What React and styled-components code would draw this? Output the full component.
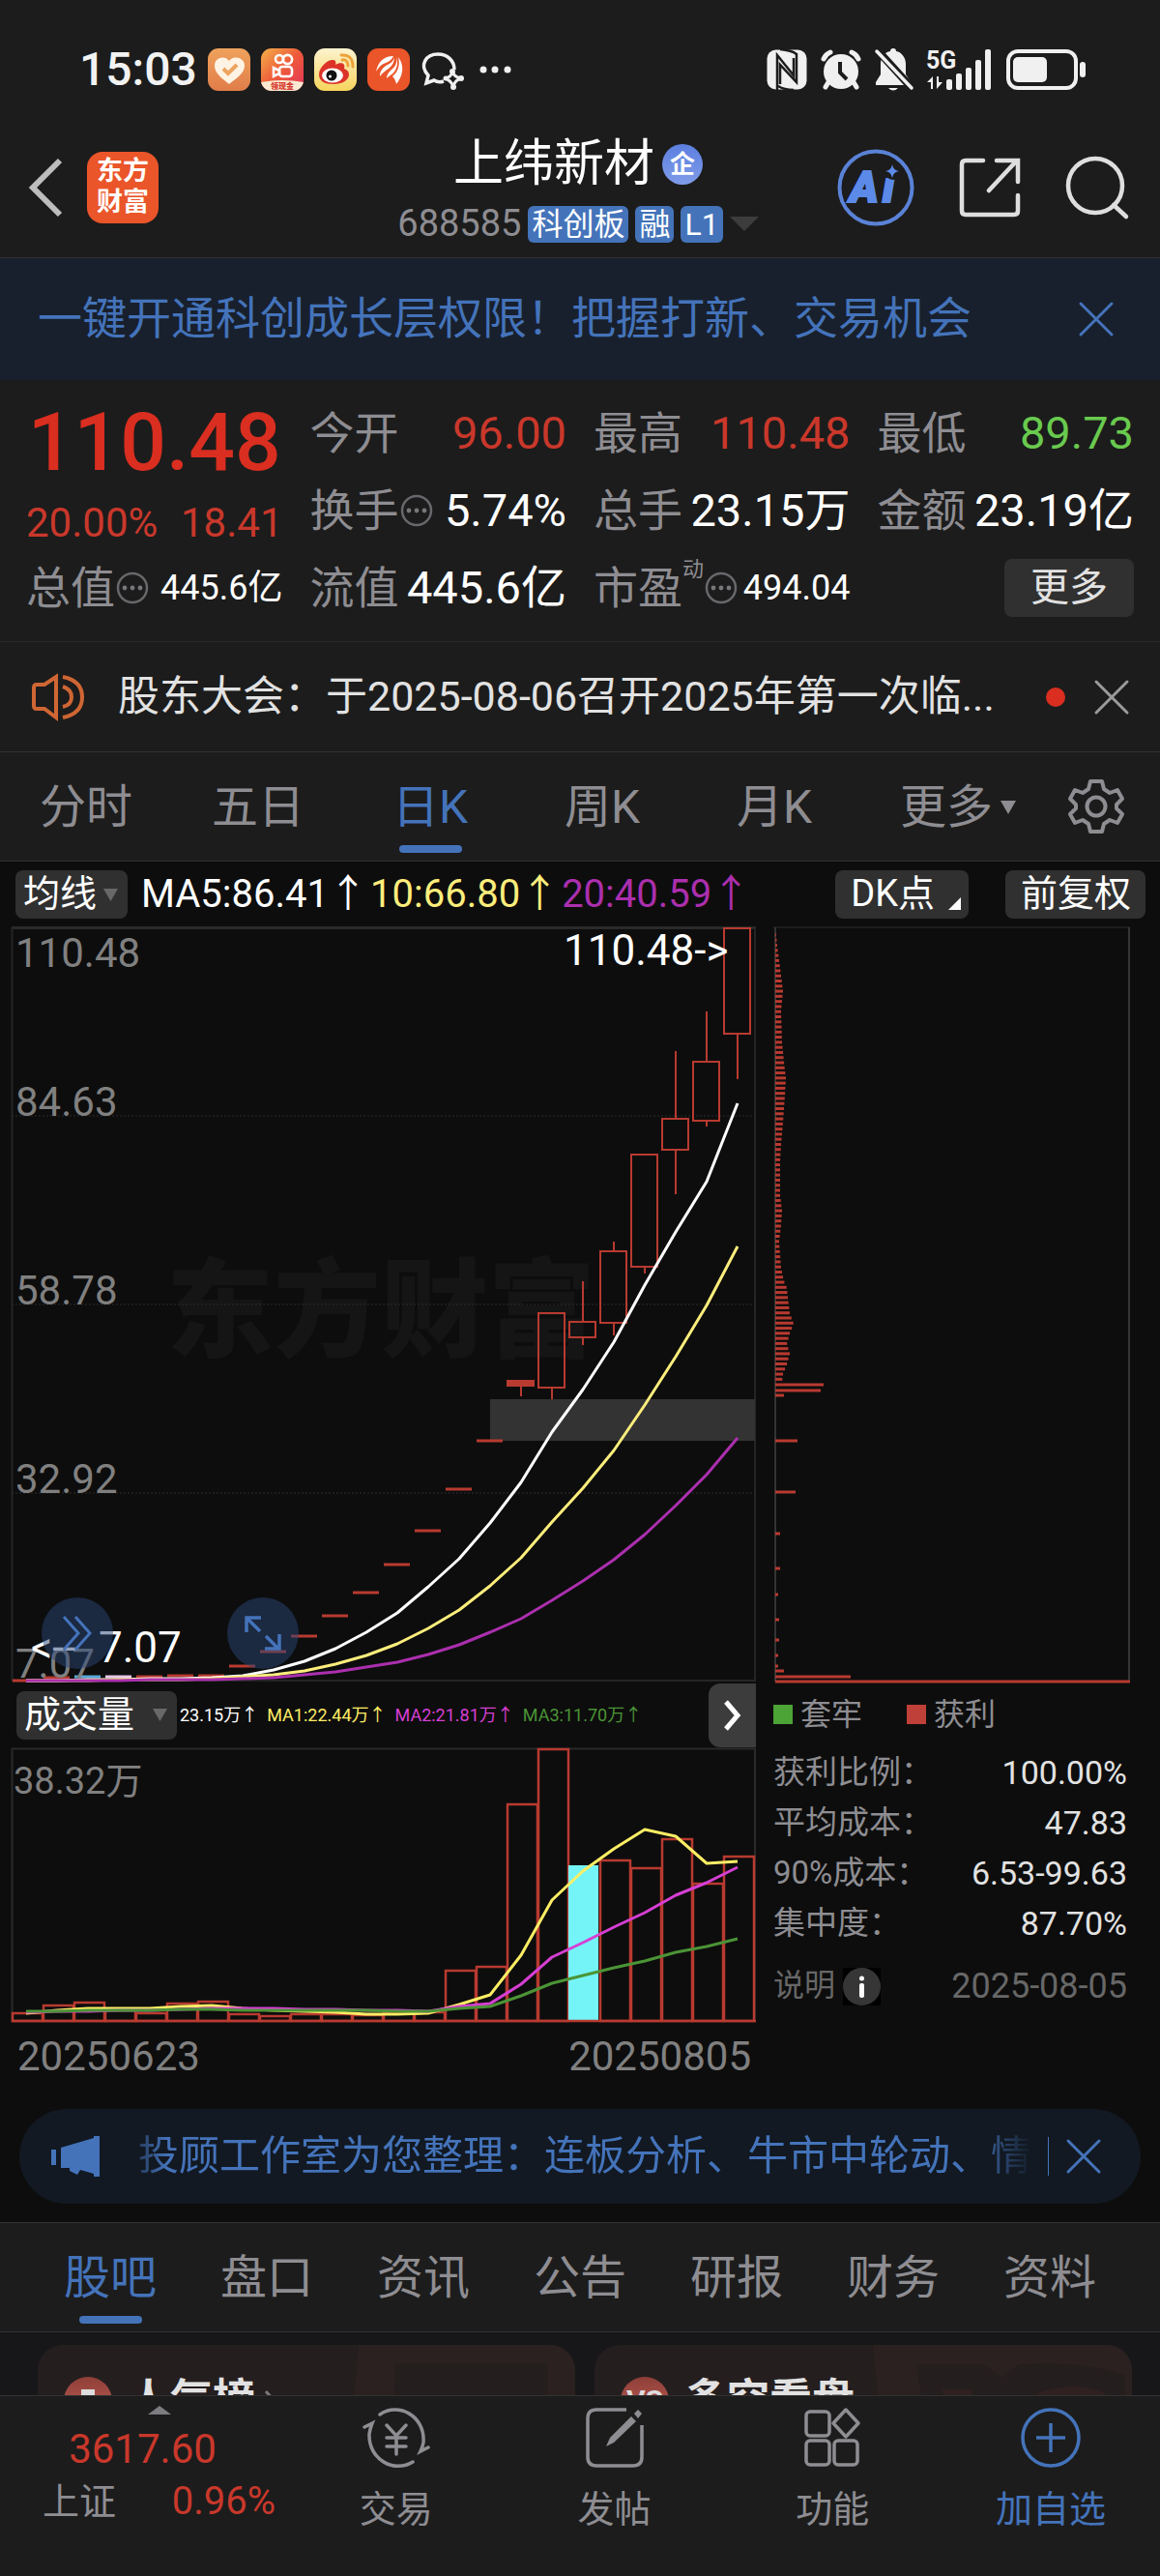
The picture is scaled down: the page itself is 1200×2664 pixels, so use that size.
import React from 'react';
import styled, { createGlobalStyle } from 'styled-components';

const c = {
  panel: '#1c1c1c',
  canvas: '#0d0d0d',
  line: '#323233',
  grey: '#8e8d92',
  axis: '#808080',
  soft: '#e2e2e2',
  blue: '#4473ba',
  red: '#c9382b',
  price: '#d92e20',
  green: '#69ca4e',
  candle: '#b83a30',
  chip: '#303030',
};

const GlobalStyle = createGlobalStyle`
  *, *::before, *::after { box-sizing: border-box; }
  body {
    margin: 0;
    background: ${c.panel};
    color: #fff;
    font-family: Roboto, "Noto Sans CJK SC", sans-serif;
    line-height: 1.3;
  }
  button, select {
    font: inherit;
    color: inherit;
    background: none;
    border: 0;
    padding: 0;
    margin: 0;
    cursor: pointer;
  }
  dl, dt, dd, h1, h2, p { margin: 0; font-weight: 400; }
  svg { display: block; flex: none; overflow: visible; }
`;

const Page = styled.div`
  display: flex;
  flex-direction: column;
  min-width: 0;
  white-space: nowrap;
  overflow: hidden;
`;

/* ---------- status bar ---------- */
const StatusBar = styled.div`
  display: flex;
  align-items: center;
  justify-content: space-between;
  height: 122px;
  padding: 22px 77px 0 82px;
`;
const StatusGroup = styled.div`
  display: flex;
  align-items: center;
  gap: ${(p) => p.$gap}px;
`;
const Clock = styled.time`
  font-size: 48px;
  font-weight: 500;
  line-height: 56px;
  color: #f2f2f2;
`;

/* ---------- header ---------- */
const Header = styled.header`
  display: grid;
  grid-template-columns: 1fr auto 1fr;
  align-items: center;
  height: 145px;
  padding: 0 32px 0 28px;
  border-bottom: 1px solid ${c.line};
`;
const HeaderSide = styled.div`
  display: flex;
  align-items: center;
  gap: ${(p) => p.$gap}px;
  justify-content: ${(p) => (p.$end ? 'flex-end' : 'flex-start')};
`;
const IconButton = styled.button`
  display: flex;
  align-items: center;
  justify-content: center;
  color: ${(p) => p.$color || c.grey};
`;
const BrandLogo = styled.div`
  width: 74px;
  height: 74px;
  padding-top: 4px;
  border-radius: 16px;
  background: #ea5529;
  font-size: 27px;
  font-weight: 700;
  line-height: 32px;
  text-align: center;
`;
const TitleBlock = styled.div`
  display: flex;
  flex-direction: column;
  align-items: center;
  gap: 3px;
  padding-top: 4px;
`;
const Title = styled.h1`
  display: flex;
  align-items: center;
  gap: 8px;
  font-size: 52px;
  line-height: 68px;
`;
const CompanyMark = styled.span`
  width: 42px;
  height: 42px;
  border-radius: 50%;
  background: linear-gradient(#5c7fe0, #7f9ce8);
  font-size: 26px;
  font-weight: 700;
  line-height: 42px;
  text-align: center;
`;
const CodeRow = styled.div`
  display: flex;
  align-items: center;
  gap: 7px;
  height: 50px;
  font-size: 38px;
  color: ${c.grey};
`;
const Tag = styled.span`
  height: 38px;
  padding: 0 4px;
  border-radius: 6px;
  background: ${c.blue};
  color: #fff;
  font-size: 32px;
  line-height: 38px;
`;

/* ---------- promo banner ---------- */
const Banner = styled.div`
  display: flex;
  align-items: center;
  justify-content: space-between;
  height: 126px;
  padding: 0 48px 0 39px;
  background: #18202d;
  color: ${c.blue};
  font-size: 46px;
`;

/* ---------- quote ---------- */
const Quote = styled.section`
  display: grid;
  grid-template-columns: repeat(4, 1fr);
  gap: 28px;
  padding: 15px 27px;
  border-bottom: 1px solid #29292a;
`;
const QuoteColumn = styled.dl`
  display: flex;
  flex-direction: column;
`;
const Price = styled.dd`
  height: 100px;
  font-size: 84px;
  font-weight: 500;
  line-height: 100px;
  text-align: center;
  color: ${c.price};
`;
const Change = styled.dd`
  display: flex;
  justify-content: space-between;
  height: 60px;
  font-size: 42px;
  line-height: 66px;
  color: ${c.red};
`;
const Stat = styled.div`
  display: flex;
  align-items: center;
  justify-content: space-between;
  height: 80px;
`;
const StatLabel = styled.dt`
  display: flex;
  align-items: center;
  font-size: 46px;
  line-height: 60px;
  color: ${c.grey};
`;
const Superscript = styled.sup`
  align-self: flex-start;
  font-size: 22px;
  line-height: 22px;
`;
const StatValue = styled.dd`
  font-size: ${(p) => (p.$small ? 36 : 47)}px;
  line-height: 60px;
  color: ${(p) => p.$color || '#fff'};
`;
const MoreCell = styled.div`
  display: flex;
  align-items: center;
  justify-content: flex-end;
  height: 80px;
`;
const MoreButton = styled.button`
  width: 134px;
  height: 60px;
  border-radius: 8px;
  background: ${c.chip};
  color: ${c.soft};
  font-size: 40px;
  line-height: 60px;
`;

/* ---------- notice ---------- */
const Notice = styled.div`
  display: flex;
  align-items: center;
  height: 114px;
  padding: 0 32px;
  border-bottom: 1px solid ${c.line};
`;
const NoticeText = styled.p`
  flex: 1;
  min-width: 0;
  margin-left: 34px;
  overflow: hidden;
  font-size: 43px;
  color: ${c.soft};
`;
const UnreadDot = styled.i`
  width: 20px;
  height: 20px;
  margin-right: 30px;
  border-radius: 50%;
  background: ${c.price};
`;

/* ---------- tabs ---------- */
const TabBar = styled.nav`
  display: flex;
  height: 113px;
  padding: 0 ${(p) => p.$inset || 0}px;
  border-bottom: 1px solid ${c.line};
  background: ${c.panel};
`;
const Tab = styled.button`
  flex: 1;
  display: flex;
  flex-direction: column;
  align-items: center;
  padding-top: 21px;
  color: ${(p) => (p.$active ? c.blue : c.grey)};
`;
const TabLabel = styled.span`
  display: flex;
  align-items: center;
  height: 72px;
  font-size: 48px;
`;
const TabCaret = styled.span`
  width: 24px;
  margin-right: -24px;
  padding-left: 8px;
`;
const TabMarker = styled.i`
  width: 65px;
  height: 8px;
  margin-top: 3px;
  border-radius: 4px;
  background: ${c.blue};
`;
const SettingsCell = styled(IconButton)`
  width: 132px;
`;

/* ---------- charts ---------- */
const ChartPanel = styled.section`
  background: ${c.canvas};
  padding-bottom: 19px;
  border-bottom: 1px solid ${c.line};
`;
const ChartToolbar = styled.div`
  display: flex;
  align-items: center;
  height: 68px;
  padding: 0 15px 0 16px;
`;
const Picker = styled.label`
  display: flex;
  align-items: center;
  gap: ${(p) => p.$gap}px;
  height: 50px;
  padding: 0 10px 0 8px;
  border-radius: 8px;
  background: ${c.chip};
  color: #686868;
  font-size: 38px;
`;
const PickerSelect = styled.select`
  appearance: none;
  height: 50px;
  color: #fff;
  outline: 0;
  option { background: ${c.chip}; }
`;
const Averages = styled.div`
  display: flex;
  gap: ${(p) => p.$gap}px;
  margin-left: ${(p) => p.$left}px;
  font-size: ${(p) => p.$size}px;
  line-height: 50px;
`;
const Average = styled.span`
  color: ${(p) => p.$color};
`;
const ChipButton = styled.button`
  display: flex;
  align-items: center;
  gap: 14px;
  height: 50px;
  padding: 0 ${(p) => p.$right}px 0 16px;
  margin-left: ${(p) => (p.$push ? 'auto' : '38px')};
  border-radius: 8px;
  background: ${c.chip};
  color: #fff;
  font-size: 38px;
`;
const ChartGrid = styled.div`
  display: grid;
  grid-template-columns: 770fr 369fr;
  gap: 18px;
  padding: 0 31px 0 12px;
`;
const ChartColumn = styled.div`
  min-width: 0;
`;
const Drawing = styled.svg`
  width: 100%;
  height: auto;
`;
const KlineFrame = styled.div`
  position: relative;
`;
const RoundTool = styled.button`
  position: absolute;
  bottom: 13px;
  left: ${(p) => p.$left}%;
  display: flex;
  align-items: center;
  justify-content: center;
  width: 74px;
  height: 74px;
  border-radius: 50%;
  background: rgba(42, 70, 118, 0.5);
`;
const VolumeToolbar = styled.div`
  display: flex;
  align-items: center;
  height: 69px;
  padding-left: 5px;
`;
const NextIndicator = styled.button`
  display: flex;
  align-items: center;
  justify-content: center;
  width: 49px;
  height: 66px;
  margin-left: auto;
  border-radius: 12px 0 0 12px;
  background: #3c3c3c;
`;
const DateAxis = styled.div`
  display: flex;
  justify-content: space-between;
  padding: 0 5px 0 6px;
  font-size: 42px;
  line-height: 72px;
  color: ${c.axis};
`;
const Legend = styled.div`
  display: flex;
  gap: 46px;
  height: 68px;
  font-size: 32px;
  line-height: 68px;
  color: ${c.grey};
`;
const LegendItem = styled.span`
  display: flex;
  align-items: center;
  gap: 8px;
  &::before {
    content: '';
    width: 20px;
    height: 20px;
    background: ${(p) => p.$color};
  }
`;
const CostList = styled.dl`
  display: flex;
  flex-direction: column;
  padding-right: 3px;
  font-size: 34px;
  line-height: 52px;
`;
const CostRow = styled.div`
  display: flex;
  justify-content: space-between;
  dt { font-size: 33px; color: ${c.grey}; }
  dd { color: ${c.soft}; }
`;
const CostFooter = styled.div`
  display: flex;
  align-items: center;
  justify-content: space-between;
  height: 78px;
  padding-right: 3px;
  font-size: 36px;
  color: #676767;
`;
const HelpButton = styled.button`
  display: flex;
  align-items: center;
  gap: 8px;
  font-size: 32px;
`;

/* ---------- adviser strip ---------- */
const Adviser = styled.div`
  display: flex;
  align-items: center;
  height: 98px;
  margin: 18px 20px 0;
  padding: 0 41px 0 33px;
  border-radius: 49px;
  background: #121922;
  color: ${c.blue};
`;
const AdviserText = styled.p`
  flex: 1;
  min-width: 0;
  margin-left: 40px;
  overflow: hidden;
  font-size: 42px;
  mask-image: linear-gradient(90deg, rgba(0, 0, 0, 0.4), #000 30px, #000 calc(100% - 70px), transparent calc(100% - 8px));
`;
const AdviserClose = styled(IconButton)`
  height: 40px;
  margin-left: 8px;
  padding-left: 18px;
  border-left: 1px solid ${c.blue};
`;

/* ---------- community cards ---------- */
const Cards = styled.section`
  display: grid;
  grid-template-columns: 1fr 1fr;
  gap: 20px;
  height: 65px;
  padding: 13px 29px 0 39px;
  overflow: hidden;
  background: #17171a;
`;
const Card = styled.article`
  position: relative;
  display: flex;
  align-items: center;
  height: 116px;
  padding-left: 27px;
  border-radius: 26px;
  overflow: hidden;
  background: #251e1e;
`;
const CardArt = styled.svg`
  position: absolute;
  top: 0;
  right: 0;
`;
const CardBadge = styled.span`
  width: 50px;
  height: 50px;
  margin-right: 16px;
  border-radius: 50%;
  background: linear-gradient(#8f3f38, #c4645a);
  color: #ddd;
  font-size: 30px;
  font-weight: 700;
  line-height: 50px;
  text-align: center;
`;
const CardTitle = styled.h2`
  margin-right: 10px;
  font-size: 44px;
  font-weight: 700;
  color: ${c.soft};
`;

/* ---------- bottom bar ---------- */
const BottomBar = styled.footer`
  display: flex;
  height: 187px;
  border-top: 1px solid ${c.line};
  background: ${c.panel};
`;
const IndexTicker = styled.button`
  display: flex;
  flex-direction: column;
  align-items: center;
  width: 297px;
  padding: 10px 12px 0 44px;
  color: ${c.grey};
`;
const IndexValue = styled.strong`
  height: 54px;
  margin: 9px 0 0 -34px;
  font-size: 42px;
  font-weight: 400;
  line-height: 54px;
  color: ${c.red};
`;
const IndexRow = styled.span`
  display: flex;
  align-self: stretch;
  justify-content: space-between;
  font-size: 38px;
  line-height: 54px;
`;
const IndexChange = styled.span`
  font-size: 40px;
  color: ${c.red};
`;
const NavItem = styled.button`
  flex: 1;
  display: flex;
  flex-direction: column;
  align-items: center;
  gap: 14px;
  padding-top: 10px;
  color: ${(p) => (p.$accent ? c.blue : c.grey)};
  font-size: 38px;
  line-height: 54px;
`;

/* ---------- icons ---------- */
const Caret = ({ w, h }) => (
  <svg width={w} height={h} viewBox="0 0 10 10" preserveAspectRatio="none" fill="currentColor" aria-hidden="true">
    <path d="M0 0h10L5 10z" />
  </svg>
);
const Cross = ({ size, stroke = 3 }) => (
  <svg width={size} height={size} viewBox={`0 0 ${size} ${size}`} stroke="currentColor" strokeWidth={stroke} strokeLinecap="round">
    <path d={`M2 2L${size - 2} ${size - 2}M${size - 2} 2L2 ${size - 2}`} />
  </svg>
);
const Ellipsis = () => (
  <svg width="35" height="35" viewBox="0 0 35 35" fill="none" stroke="#68676b" strokeWidth="2.5">
    <circle cx="18" cy="17" r="15" />
    <g fill="#77767a" stroke="none">
      <circle cx="10" cy="17" r="2.400" />
      <circle cx="18" cy="17" r="2.400" />
      <circle cx="26" cy="17" r="2.400" />
    </g>
  </svg>
);

const HeartApp = () => (
  <svg width="44" height="44" viewBox="0 0 44 44">
    <defs><linearGradient id="heart" x2="0" y2="1"><stop stopColor="#efa25c" /><stop offset="1" stopColor="#e07d4a" /></linearGradient></defs>
    <rect width="44" height="44" rx="11" fill="url(#heart)" />
    <path d="M22 13c-4-6-15-4-15 5 0 8 9 14 15 19 6-5 16-11 16-19 0-9-12-11-16-5z" fill="#fff3e4" />
    <path d="M16 21l5 5 9-9" fill="none" stroke="#eda45f" strokeWidth="4" />
  </svg>
);
const KuaishouApp = () => (
  <svg width="44" height="44" viewBox="0 0 44 44">
    <defs>
      <linearGradient id="ks" x2="1" y2="1"><stop stopColor="#f3b24a" /><stop offset=".5" stopColor="#ee5a3a" /><stop offset="1" stopColor="#e2345a" /></linearGradient>
      <clipPath id="ksClip"><rect width="44" height="44" rx="11" /></clipPath>
    </defs>
    <g clipPath="url(#ksClip)">
      <rect width="44" height="44" fill="url(#ks)" />
      <g fill="none" stroke="#fff" strokeWidth="2.600">
        <circle cx="19" cy="11" r="4" /><circle cx="27.500" cy="11.500" r="4.600" />
        <rect x="19" y="19" width="13" height="10" rx="3" /><path d="M19 23l-6-3v9l6-3z" />
      </g>
      <path d="M0 35q22-4 44 0v9H0z" fill="#fbe9d2" />
    </g>
    <text x="22" y="42" fontSize="8" fontWeight="900" textAnchor="middle" fill="#d63a2c">领现金</text>
  </svg>
);
const WeiboApp = () => (
  <svg width="44" height="44" viewBox="0 0 44 44">
    <defs><linearGradient id="wb" x2="0" y2="1"><stop stopColor="#fdf3cf" /><stop offset="1" stopColor="#f6d55c" /></linearGradient></defs>
    <rect width="44" height="44" rx="11" fill="url(#wb)" />
    <path d="M5 27c0-7 8-15 14-15 3 0 4 2 3 5 5-3 11-2 9 4 3 1 5 3 5 6 0 6-7 10-16 10S5 34 5 27z" fill="#dc3328" />
    <ellipse cx="19" cy="28" rx="11" ry="7.500" fill="#fff" />
    <circle cx="18" cy="28" r="5.500" fill="#111" /><circle cx="16.500" cy="29" r="1.500" fill="#fff" />
    <path d="M29 12q6-1 6 6M28 7q12-1 12 12" fill="none" stroke="#eda23a" strokeWidth="3" strokeLinecap="round" />
  </svg>
);
const EastmoneyApp = () => (
  <svg width="44" height="44" viewBox="0 0 44 44">
    <rect width="44" height="44" rx="11" fill="#ea5529" />
    <g fill="#fff">
      <path d="M27 8C17 8 11 14 9 24c3-5 6-8 10-9 3-1 6-3 8-7z" />
      <path d="M28 9c-1 5-5 7-9 9-4 3-6 6-6 11 3-4 6-6 9-8 4-3 6-7 6-12z" />
      <path d="M30 9c1 6-1 10-5 13-3 3-5 5-5 9 3-3 6-4 8-7 3-4 4-9 2-15z" />
      <path d="M32 9c6 8 6 18-2 28-1-4-2-6-4-8 6-5 8-12 6-20z" />
    </g>
  </svg>
);
const ChatIcon = () => (
  <svg width="46" height="44" viewBox="0 0 46 44" fill="none" stroke="#f0f0f0" strokeWidth="3.500">
    <path d="M24 34c-3 1-7 1-10-1l-8 3 2-8C-2 17 6 6 18 6c10 0 17 7 17 16" />
    <path d="M33 24q2 6 9 7-7 2-8 9-2-7-9-9 7-1 8-7z" strokeWidth="3" />
    <g fill="#f0f0f0" stroke="none"><circle cx="33" cy="24" r="3" /><circle cx="42" cy="31" r="3" /><circle cx="34" cy="40" r="3" /><circle cx="26" cy="31" r="2.500" /></g>
  </svg>
);
const MoreDots = () => (
  <svg width="42" height="10" viewBox="0 0 42 10" fill="#f0f0f0"><circle cx="8" cy="5" r="3.500" /><circle cx="20" cy="5" r="3.500" /><circle cx="33" cy="5" r="3.500" /></svg>
);
const NfcIcon = () => (
  <svg width="42" height="42" viewBox="0 0 42 42">
    <rect width="41" height="41" x="0.500" y="0.500" rx="9" fill="#f0f0f0" />
    <path d="M11 42V6l17 21V9M14 0q12 1 17 5M28 42q-10 0-16-4M31 4v30L14 16v20" fill="none" stroke="#1c1c1c" strokeWidth="2.500" />
  </svg>
);
const AlarmIcon = () => (
  <svg width="42" height="42" viewBox="0 0 42 42">
    <circle cx="21" cy="23" r="18" fill="#f0f0f0" />
    <g stroke="#f0f0f0" strokeWidth="5" strokeLinecap="round" fill="none"><path d="M3 10q2-5 7-7M39 10q-2-5-7-7M8 34l-3 5M34 34l3 5" /></g>
    <path d="M20 13v11l7 7" fill="none" stroke="#1c1c1c" strokeWidth="4" />
  </svg>
);
const MutedBell = () => (
  <svg width="40" height="46" viewBox="0 0 40 46">
    <path d="M19 1c2 0 3 1 3 3 6 1 10 7 10 13v11l5 8v3H1v-3l5-8V17c0-6 4-12 10-13 0-2 1-3 3-3zM14 42h10q-5 5-10 0z" fill="#f0f0f0" />
    <path d="M0 0l40 44" stroke="#1c1c1c" strokeWidth="8" /><path d="M2 4l36 38" stroke="#f0f0f0" strokeWidth="3.500" strokeLinecap="round" />
  </svg>
);
const SignalIcon = () => (
  <svg width="68" height="42" viewBox="0 0 68 42" fill="#f0f0f0">
    <text x="-1" y="20" fontSize="25" fontWeight="700">5G</text>
    <path d="M0 34l6-6v13H4v-7zM16 34l-6 7V28h2v6z" />
    <rect x="20" y="31" width="6" height="11" rx="2" /><rect x="30" y="25" width="6" height="17" rx="2" /><rect x="40" y="19" width="6" height="23" rx="2" /><rect x="50" y="11" width="6" height="31" rx="2" /><rect x="60" y="0" width="6" height="42" rx="2" />
  </svg>
);
const BatteryIcon = () => (
  <svg width="82" height="42" viewBox="0 0 82 42">
    <rect x="2" y="2" width="70" height="38" rx="10" fill="none" stroke="#f0f0f0" strokeWidth="4" />
    <rect x="7" y="8" width="35" height="26" rx="5" fill="#f0f0f0" /><rect x="76" y="13" width="6" height="16" rx="3" fill="#f0f0f0" />
  </svg>
);
const BackIcon = () => (
  <svg width="36" height="62" viewBox="0 0 36 62" fill="none" stroke="#bdbdbd" strokeWidth="6"><path d="M34 3L6 31l28 28" /></svg>
);
const AiIcon = () => (
  <svg width="80" height="80" viewBox="0 0 80 80">
    <circle cx="40" cy="40" r="37.500" fill="none" stroke="#5a82d6" strokeWidth="4" />
    <text y="55" fontSize="45" fontWeight="900" fontStyle="italic" fill="#5c8ae8" stroke="#5c8ae8" strokeWidth="2"><tspan x="13">A</tspan><tspan x="47">i</tspan></text>
    <circle cx="58" cy="23" r="9" fill="#1c1c1c" />
    <path d="M57 16q1 6 7 7-6 1-7 7-1-6-7-7 6-1 7-7z" fill="#5c8ae8" />
  </svg>
);
const ShareIcon = () => (
  <svg width="64" height="64" viewBox="0 0 64 64" fill="none" stroke="#dedede" strokeWidth="4.500" strokeLinecap="round">
    <path d="M25 4H7q-4 0-4 4v48q0 4 4 4h50q4 0 4-4V40M39 4h22v22M59 5L31 35" />
  </svg>
);
const SearchIcon = () => (
  <svg width="66" height="66" viewBox="0 0 66 66" fill="none" stroke="#dedede" strokeWidth="4.500" strokeLinecap="round">
    <circle cx="31" cy="31" r="28" /><path d="M50 51l13 12" />
  </svg>
);
const SpeakerIcon = () => (
  <svg width="56" height="50" viewBox="0 0 56 50" fill="none" stroke="#cf6633" strokeWidth="4">
    <path d="M26 4v42L14 37H6q-3 0-3-3V15q0-3 3-3h8L26 4zM33 14q9 3 9 11t-9 10M33 4q20 4 20 21T33 46" />
  </svg>
);
const GearIcon = () => (
  <svg width="58" height="58" viewBox="0 0 58 58" fill="none" stroke="currentColor" strokeWidth="4" strokeLinejoin="round">
    <path d="M23 3h12l2 8 6 4 8-3 5 9-6 6v4l6 6-5 9-8-3-6 4-2 8H23l-2-8-6-4-8 3-5-9 6-6v-4l-6-6 5-9 8 3 6-4z" /><circle cx="29" cy="29" r="9.500" />
  </svg>
);
const MegaphoneIcon = () => (
  <svg width="50" height="44" viewBox="0 0 50 44" fill="currentColor">
    <path d="M0 15h5v16H0zM10 13L44 3V1h6v42h-6v-3l-14-4-3 5-8-4v-3h-9z" />
  </svg>
);
const InfoIcon = () => (
  <svg width="39" height="39" viewBox="0 0 39 39"><rect width="39" height="39" fill="#000" /><circle cx="19.500" cy="19.500" r="19.500" fill="#363636" /><circle cx="19.500" cy="11" r="2.500" fill="#fff" /><rect x="17" y="16" width="5" height="15" rx="2" fill="#fff" /></svg>
);
const TradeIcon = () => (
  <svg width="72" height="66" viewBox="0 0 72 66" fill="none" stroke="currentColor" strokeWidth="3.500" strokeLinecap="round">
    <path d="M19 9C38-4 66 10 64 38q-1 5-3 9l8-4M53 58C34 70 7 56 8 29q1-6 3-11l-8 4M26 20l10 11 10-11M36 31v19M26 33h20M26 42h20" />
  </svg>
);
const PostIcon = () => (
  <svg width="62" height="66" viewBox="0 0 62 66" fill="none" stroke="currentColor" strokeWidth="3.500">
    <path d="M43 4H12q-9 0-9 9v40q0 9 9 9h38q9 0 9-9V20" />
    <path d="M22 42l4-9 22-22 5 5-23 22zM51 8l4-4 4 4-4 5z" fill="currentColor" stroke="none" />
  </svg>
);
const AppsIcon = () => (
  <svg width="60" height="66" viewBox="0 0 60 66" fill="none" stroke="currentColor" strokeWidth="3.500" strokeLinejoin="round">
    <rect x="3" y="6" width="24" height="25" rx="4" /><rect x="3" y="36" width="24" height="25" rx="4" /><rect x="32" y="36" width="24" height="25" rx="4" />
    <path d="M44 4L57 18 44 32 31 18z" />
  </svg>
);
const AddIcon = () => (
  <svg width="66" height="66" viewBox="0 0 66 66" fill="none" stroke="currentColor" strokeWidth="3.500"><circle cx="33" cy="33" r="29" /><path d="M33 18v30M18 33h30" /></svg>
);

/* ---------- chart data ---------- */
const STEP = 32;
const slotX = (i) => STEP * i + 15;

const gaps = [779, 776, 775, 775, 775, 774, 774, 764, 749, 733, 712, 688, 659, 624, 581, 531];
const gapTint = { 2: '#5aa9d8', 3: '#e8c8e8' };
const candles = [
  { i: 16, top: 469, bottom: 474, low: 485, solid: true },
  { i: 17, top: 399, bottom: 476, low: 488 },
  { i: 18, high: 366, top: 408, bottom: 424, low: 432 },
  { i: 19, high: 325, top: 335, bottom: 409, low: 422 },
  { i: 20, top: 235, bottom: 351, low: 358 },
  { i: 21, high: 128, top: 198, bottom: 230, low: 276 },
  { i: 22, high: 87, top: 139, bottom: 200, low: 206 },
  { i: 23, top: 1, bottom: 110, low: 157 },
];
const averages = [
  { color: '#ffffff', y: [779, 779, 778, 778, 777, 777, 776, 774, 768, 759, 746, 729, 709, 682, 653, 616, 574, 522, 478, 429, 370, 315, 263, 182] },
  { color: '#fdee7c', y: [779, 779, 779, 778, 778, 778, 777, 775, 773, 769, 762, 753, 741, 725, 706, 681, 652, 615, 580, 541, 494, 444, 391, 330] },
  { color: '#ab2fae', y: [779, 779, 779, 779, 778, 778, 778, 777, 776, 773, 770, 765, 760, 752, 742, 729, 715, 696, 676, 654, 628, 598, 566, 528] },
];
const priceLabels = [['110.48', 41], ['84.63', 195], ['58.78', 390], ['32.92', 585], ['7.07', 776]];

const volumes = [274, 266, 263, 271, 274, 264, 262, 275, 277, 275, 275, 276, 274, 273, 230, 226, 58, 1, 121, 116, 124, 94, 140, 112];
const volumeAverages = [
  { color: '#fdee64', y: [274, 271, 269, 269, 269, 267, 266, 269, 271, 272, 273, 275, 275, 274, 265, 255, 214, 157, 127, 104, 84, 91, 119, 117] },
  { color: '#d63fd4', y: [273, 272, 272, 271, 271, 270, 269, 269, 269, 270, 270, 271, 271, 272, 267, 264, 244, 216, 201, 185, 170, 152, 139, 123] },
  { color: '#4b9436', y: [272, 272, 271, 271, 271, 270, 270, 271, 271, 271, 271, 271, 272, 272, 269, 267, 256, 243, 235, 227, 220, 211, 205, 197] },
];

const profileShape = [
  [8, 1], [19, 2], [34, 4], [50, 6], [66, 8], [76, 7], [87, 6], [119, 7], [139, 9], [156, 11], [174, 10], [202, 8], [225, 6],
  [242, 5], [277, 5], [293, 7], [308, 6], [325, 4], [352, 6], [366, 9], [373, 12], [383, 13], [399, 15], [410, 19], [420, 15],
  [431, 12], [441, 15], [452, 12], [462, 8], [470, 7],
];
const profileSpikes = [
  [473, 50], [479, 47], [484, 9], [531, 23], [584, 21], [627, 5], [663, 5], [690, 3], [716, 4], [737, 4], [753, 3], [764, 3], [769, 9], [775, 78], [780, 367],
];
const profileRows = (() => {
  const rows = [];
  for (let y = 8; y < 470; y += 5.28) {
    const n = profileShape.findIndex((p) => p[0] > y);
    const [y0, w0] = profileShape[n - 1];
    const [y1, w1] = profileShape[n];
    rows.push([y, w0 + ((w1 - w0) * (y - y0)) / (y1 - y0)]);
  }
  return rows.concat(profileSpikes);
})();

const toPoints = (ys) => ys.map((y, i) => `${slotX(i)},${y}`).join(' ');

function KlineChart() {
  return (
    <Drawing viewBox="0 0 770 780" role="img" aria-label="日K">
      <text x="160" y="436" fontSize="111" fontWeight="900" fill="#151515">东方财富</text>
      <path d="M0 .5H770" stroke="#2a2a2a" strokeWidth="3" />
      <path d="M.5 0V780M0 779H770M769 0V780" stroke="#252525" strokeWidth="2" fill="none" />
      <path d="M0 195H770M0 390H770M0 585H770" stroke="#2c2c2c" strokeDasharray="2 2" />
      <rect x="495" y="488" width="274" height="43" fill="#333" />
      <g stroke={c.candle} strokeWidth="3">
        {gaps.map((y, i) => (
          <path key={i} d={`M${slotX(i) - 14} ${y}h27`} stroke={gapTint[i] || c.candle} />
        ))}
      </g>
      <g stroke={c.candle} strokeWidth="2" fill="none">
        {candles.map((k) => (
          <React.Fragment key={k.i}>
            {k.high && <path d={`M${slotX(k.i)} ${k.high}V${k.top}`} />}
            <path d={`M${slotX(k.i)} ${k.bottom}V${k.low}`} />
            <rect x={slotX(k.i) - 14} y={k.top} width="27" height={k.bottom - k.top} fill={k.solid ? c.candle : 'none'} />
          </React.Fragment>
        ))}
      </g>
      {averages.map((m) => (
        <polyline key={m.color} points={toPoints(m.y)} fill="none" stroke={m.color} strokeWidth="3" strokeLinejoin="round" />
      ))}
      <g fontSize="42" fill={c.axis}>
        {priceLabels.map(([t, y]) => <text key={t} x="4" y={y}>{t}</text>)}
      </g>
      <g fontSize="44" fill="#fff">
        <text x="571" y="39">110.48-&gt;</text>
        <text x="20" y="760">&lt;--</text>
        <text x="90" y="760">7.07</text>
      </g>
    </Drawing>
  );
}

function VolumeChart() {
  return (
    <Drawing viewBox="0 0 770 283" role="img" aria-label="成交量">
      <path d="M0 .5H770M769 0V283M.5 0V283" stroke="#2a2a2a" strokeWidth="2" fill="none" />
      <text x="2" y="47" fontSize="38" fill={c.axis}>38.32万</text>
      <g stroke={c.candle} strokeWidth="2.500" fill="none">
        {volumes.map((y, i) =>
          i === 18
            ? <rect key={i} x={STEP * i} y={y} width={STEP - 1} height={283 - y} fill="#74f4f6" stroke="none" />
            : <rect key={i} x={STEP * i + 1} y={y} width={STEP - 1} height={282 - y} />
        )}
        <path d="M0 282H770" />
      </g>
      {volumeAverages.map((m) => (
        <polyline key={m.color} points={toPoints(m.y)} fill="none" stroke={m.color} strokeWidth="3" strokeLinejoin="round" />
      ))}
    </Drawing>
  );
}

function CostProfile() {
  return (
    <Drawing viewBox="0 0 369 780" role="img" aria-label="筹码分布">
      <path d="M0 0H369" stroke="#2c2c2c" strokeWidth="1" />
      <path d="M2 0V780M368 0V780" stroke="#343434" strokeWidth="2" />
      <g stroke={c.candle} strokeWidth="3">
        {profileRows.map(([y, w]) => <path key={y} d={`M2 ${y}h${w}`} />)}
      </g>
    </Drawing>
  );
}

const StatItem = ({ label, value, hint, sup, small, color }) => (
  <Stat>
    <StatLabel>{label}{sup && <Superscript>{sup}</Superscript>}{hint && <Ellipsis />}</StatLabel>
    <StatValue $small={small} $color={color}>{value}</StatValue>
  </Stat>
);

const TabItem = ({ active, children }) => (
  <Tab $active={active} aria-current={active ? 'true' : undefined}>
    <TabLabel>{children}</TabLabel>
    {active && <TabMarker />}
  </Tab>
);

const costs = [['获利比例：', '100.00%'], ['平均成本：', '47.83'], ['90%成本：', '6.53-99.63'], ['集中度：', '87.70%']];
const sections = ['股吧', '盘口', '资讯', '公告', '研报', '财务', '资料'];

export default function App() {
  return (
    <Page>
      <GlobalStyle />
      <StatusBar>
        <StatusGroup $gap={11}>
          <Clock>15:03</Clock>
          <HeartApp /><KuaishouApp /><WeiboApp /><EastmoneyApp /><ChatIcon /><MoreDots />
        </StatusGroup>
        <StatusGroup $gap={14}>
          <NfcIcon /><AlarmIcon /><MutedBell /><SignalIcon /><BatteryIcon />
        </StatusGroup>
      </StatusBar>

      <Header>
        <HeaderSide $gap={26}>
          <IconButton aria-label="返回"><BackIcon /></IconButton>
          <BrandLogo>东方<br />财富</BrandLogo>
        </HeaderSide>
        <TitleBlock>
          <Title>上纬新材<CompanyMark>企</CompanyMark></Title>
          <CodeRow>
            <span>688585</span><Tag>科创板</Tag><Tag>融</Tag><Tag>L1</Tag>
            <IconButton $color="#3c3c3c" aria-label="展开"><Caret w={30} h={15} /></IconButton>
          </CodeRow>
        </TitleBlock>
        <HeaderSide $gap={46} $end>
          <IconButton aria-label="Ai"><AiIcon /></IconButton>
          <IconButton aria-label="分享"><ShareIcon /></IconButton>
          <IconButton aria-label="搜索"><SearchIcon /></IconButton>
        </HeaderSide>
      </Header>

      <Banner>
        <span>一键开通科创成长层权限！把握打新、交易机会</span>
        <IconButton $color={c.blue} aria-label="关闭"><Cross size={36} /></IconButton>
      </Banner>

      <Quote>
        <QuoteColumn>
          <Price>110.48</Price>
          <Change><span>20.00%</span><span>18.41</span></Change>
          <StatItem label="总值" value="445.6亿" hint small />
        </QuoteColumn>
        <QuoteColumn>
          <StatItem label="今开" value="96.00" color={c.red} />
          <StatItem label="换手" value="5.74%" hint />
          <StatItem label="流值" value="445.6亿" />
        </QuoteColumn>
        <QuoteColumn>
          <StatItem label="最高" value="110.48" color={c.red} />
          <StatItem label="总手" value="23.15万" />
          <StatItem label="市盈" sup="动" value="494.04" hint small />
        </QuoteColumn>
        <QuoteColumn>
          <StatItem label="最低" value="89.73" color={c.green} />
          <StatItem label="金额" value="23.19亿" />
          <MoreCell><MoreButton>更多</MoreButton></MoreCell>
        </QuoteColumn>
      </Quote>

      <Notice>
        <SpeakerIcon />
        <NoticeText>股东大会：于2025-08-06召开2025年第一次临...</NoticeText>
        <UnreadDot />
        <IconButton $color="#9b9b9b" aria-label="关闭"><Cross size={36} /></IconButton>
      </Notice>

      <TabBar>
        <TabItem>分时</TabItem>
        <TabItem>五日</TabItem>
        <TabItem active>日K</TabItem>
        <TabItem>周K</TabItem>
        <TabItem>月K</TabItem>
        <TabItem>更多<TabCaret><Caret w={16} h={14} /></TabCaret></TabItem>
        <SettingsCell aria-label="设置"><GearIcon /></SettingsCell>
      </TabBar>

      <ChartPanel>
        <ChartToolbar>
          <Picker $gap={6}>
            <PickerSelect aria-label="主图指标"><option>均线</option></PickerSelect>
            <Caret w={15} h={13} />
          </Picker>
          <Averages $size={40} $left={14} $gap={3}>
            <Average $color="#fff">MA5:86.41↑</Average>
            <Average $color="#fdee7c">10:66.80↑</Average>
            <Average $color="#ab2fae">20:40.59↑</Average>
          </Averages>
          <ChipButton $push $right={8}>
            DK点
            <svg width="13" height="32" viewBox="0 0 13 32" fill="#fff"><path d="M13 19v13H0z" /></svg>
          </ChipButton>
          <ChipButton $right={15}>前复权</ChipButton>
        </ChartToolbar>

        <ChartGrid>
          <ChartColumn>
            <KlineFrame>
              <KlineChart />
              <RoundTool $left={4} aria-label="快进">
                <svg width="32" height="38" viewBox="0 0 32 38" fill="none" stroke={c.blue} strokeWidth="3"><path d="M2 2l15 17L2 36M14 2l15 17-15 17" /></svg>
              </RoundTool>
              <RoundTool $left={29} aria-label="全屏">
                <svg width="38" height="38" viewBox="0 0 38 38" fill="none" stroke={c.blue} strokeWidth="3.500"><path d="M2 18V3h15M3 4l13 13M22 22l13 13M36 20v15H21" /></svg>
              </RoundTool>
            </KlineFrame>
            <VolumeToolbar>
              <Picker $gap={18}>
                <PickerSelect aria-label="副图指标"><option>成交量</option></PickerSelect>
                <Caret w={15} h={13} />
              </Picker>
              <Averages $size={18} $gap={9} $left={3}>
                <Average $color="#fff">23.15万↑</Average>
                <Average $color="#fdee64">MA1:22.44万↑</Average>
                <Average $color="#d63fd4">MA2:21.81万↑</Average>
                <Average $color="#4b9436">MA3:11.70万↑</Average>
              </Averages>
              <NextIndicator aria-label="下一个">
                <svg width="18" height="32" viewBox="0 0 18 32" fill="none" stroke="#fff" strokeWidth="5"><path d="M2 2l12 14L2 30" /></svg>
              </NextIndicator>
            </VolumeToolbar>
            <VolumeChart />
            <DateAxis><span>20250623</span><span>20250805</span></DateAxis>
          </ChartColumn>

          <ChartColumn>
            <CostProfile />
            <Legend>
              <LegendItem $color="#4ca336">套牢</LegendItem>
              <LegendItem $color="#bf4038">获利</LegendItem>
            </Legend>
            <CostList>
              {costs.map(([k, v]) => <CostRow key={k}><dt>{k}</dt><dd>{v}</dd></CostRow>)}
            </CostList>
            <CostFooter>
              <HelpButton>说明<InfoIcon /></HelpButton>
              <time>2025-08-05</time>
            </CostFooter>
          </ChartColumn>
        </ChartGrid>

        <Adviser>
          <MegaphoneIcon />
          <AdviserText>投顾工作室为您整理：连板分析、牛市中轮动、情</AdviserText>
          <AdviserClose $color={c.blue} aria-label="关闭"><Cross size={36} /></AdviserClose>
        </Adviser>
      </ChartPanel>

      <TabBar $inset={33}>
        {sections.map((s, i) => <TabItem key={s} active={i === 0}>{s}</TabItem>)}
      </TabBar>

      <Cards>
        <Card>
          <CardArt width="230" height="116" viewBox="0 0 230 116"><path d="M6 0H230V116H-4z" fill="#2a2120" /><path d="M44 19H202V116H40z" fill="#251e1e" /></CardArt>
          <CardBadge>
            <svg width="50" height="50" viewBox="0 0 50 50" fill="#ddd"><path d="M18 13h14v24H18zM8 24h10v13H8zM32 28h10v9H32z" /></svg>
          </CardBadge>
          <CardTitle>人气榜</CardTitle>
          <svg width="12" height="24" viewBox="0 0 12 24" fill="none" stroke="#777" strokeWidth="3"><path d="M1 2l9 10-9 10" /></svg>
        </Card>
        <Card>
          <CardArt width="268" height="116" viewBox="0 0 268 116"><path d="M0 0H268V116H12z" fill="#2a2120" /><path d="M45 20h70l18 14 18-14q70-4 110 12v84H60z" fill="#251e1e" /><path d="M72 46h30l6 60H80zM170 50q40-14 70 0v60h-70z" fill="#2f2120" /></CardArt>
          <CardBadge>VS</CardBadge>
          <CardTitle>多空看盘</CardTitle>
        </Card>
      </Cards>

      <BottomBar>
        <IndexTicker>
          <svg width="24" height="9" viewBox="0 0 24 9" fill="#7d7c80"><path d="M0 9L12 0l12 9z" /></svg>
          <IndexValue>3617.60</IndexValue>
          <IndexRow><span>上证</span><IndexChange>0.96%</IndexChange></IndexRow>
        </IndexTicker>
        <NavItem><TradeIcon />交易</NavItem>
        <NavItem><PostIcon />发帖</NavItem>
        <NavItem><AppsIcon />功能</NavItem>
        <NavItem $accent><AddIcon />加自选</NavItem>
      </BottomBar>
    </Page>
  );
}
